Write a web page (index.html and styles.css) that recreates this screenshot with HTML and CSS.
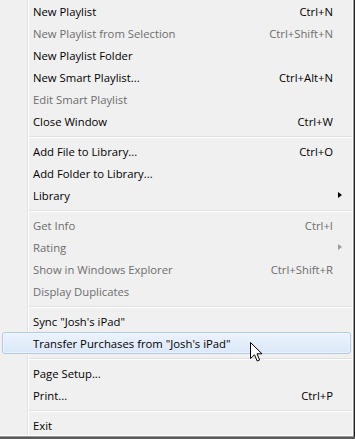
FILE: index.html
```html
<!DOCTYPE html>
<html lang="en">
	<head>
		<meta charset="utf-8">
		<title>File menu</title>
		<link rel="stylesheet" href="styles.css">
	</head>
	<body>
		<div class="menu">
			<div class="item"><span>New Playlist</span><span class="key">Ctrl+N</span></div>
			<div class="item off"><span>New Playlist from Selection</span><span class="key">Ctrl+Shift+N</span></div>
			<div class="item"><span>New Playlist Folder</span></div>
			<div class="item"><span>New Smart Playlist...</span><span class="key">Ctrl+Alt+N</span></div>
			<div class="item off"><span>Edit Smart Playlist</span></div>
			<div class="item"><span>Close Window</span><span class="key">Ctrl+W</span></div>
			<div class="sep"></div>
			<div class="item"><span>Add File to Library...</span><span class="key">Ctrl+O</span></div>
			<div class="item"><span>Add Folder to Library...</span></div>
			<div class="item"><span>Library</span><span class="key"></span><span class="sub"></span></div>
			<div class="sep"></div>
			<div class="item off"><span>Get Info</span><span class="key">Ctrl+I</span></div>
			<div class="item off"><span>Rating</span><span class="key"></span><span class="sub"></span></div>
			<div class="item off"><span>Show in Windows Explorer</span><span class="key">Ctrl+Shift+R</span></div>
			<div class="item off"><span>Display Duplicates</span></div>
			<div class="sep"></div>
			<div class="item"><span>Sync "Josh's iPad"</span></div>
			<div class="item hover"><span>Transfer Purchases from "Josh's iPad"</span></div>
			<div class="sep"></div>
			<div class="item"><span>Page Setup...</span></div>
			<div class="item"><span>Print...</span><span class="key">Ctrl+P</span></div>
			<div class="sep"></div>
			<div class="item"><span>Exit</span></div>

			<svg class="cursor" width="14" height="21" viewBox="0 0 14 21">
				<path d="M0.5 0.5 L0.5 16.5 L4.5 12.8 L7.2 19 L9.6 18 L7 11.8 L12 11.8 Z" fill="#fff" stroke="#000" stroke-width="1" stroke-linejoin="miter"/>
			</svg>
		</div>
	</body>
</html>
```
FILE: styles.css
```css
html, body {
	margin: 0;
	height: 100%;
}

body {
	background: #5a5a5a;
	font-family: "Open Sans", "Noto Sans", sans-serif;
	font-size: 11.3px;
	overflow: hidden;
}

.menu {
	position: relative;
	width: 354px;
	height: 437px;
	box-sizing: border-box;
	padding: 0 2px;
	background-color: #f0f0f0;
	background-image: linear-gradient(to right, transparent 27px, #e2e3e3 27px, #e2e3e3 28px, #fff 28px, #fff 29px, transparent 29px);
	border-right: 1px solid #979797;
	border-bottom: 1px solid #979797;
	box-shadow: inset -1px 0 #fbfbfb, inset 0 -1px #fbfbfb, 1px 0 #1e1e1e;
}

.item {
	display: grid;
	grid-template-columns: 1fr auto 18px;
	align-items: center;
	width: 349px;
	height: 22px;
	box-sizing: border-box;
	padding-left: 31px;
	color: #000;
	white-space: nowrap;
}

.off {
	color: #6d6d6d;
}

.key {
	text-align: right;
}

.sub {
	width: 0;
	height: 0;
	margin-left: 5px;
	border-top: 3.5px solid transparent;
	border-bottom: 3.5px solid transparent;
	border-left: 4px solid #000;
}

.off .sub {
	border-left-color: #9a9a9a;
}

.hover {
	padding-left: 30px;
	border: 1px solid #aecbef;
	border-radius: 3px;
	background: linear-gradient(#eaf2fc, #dce8f8);
	box-shadow: inset 0 0 0 1px rgba(255, 255, 255, 0.45);
}

.sep {
	height: 8px;
	margin-left: 27px;
	width: 323px;
	background: linear-gradient(transparent 4px, #e0e0e0 4px, #e0e0e0 5px, #fff 5px, #fff 6px, transparent 6px);
}

.cursor {
	position: absolute;
	left: 250px;
	top: 342px;
}
```
